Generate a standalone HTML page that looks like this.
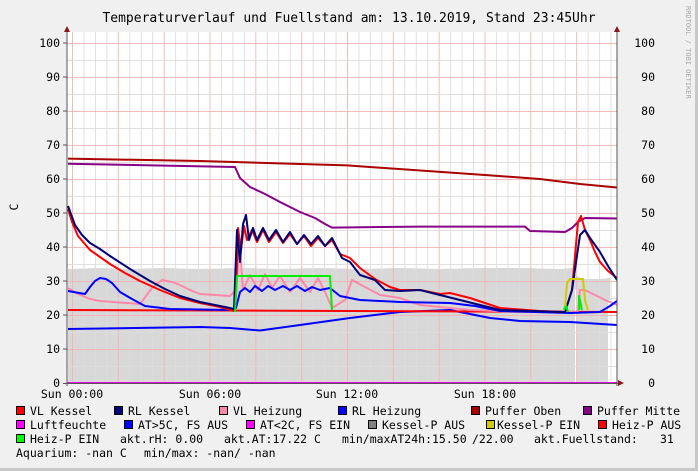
<!DOCTYPE html>
<html><head><meta charset="utf-8"><style>
html,body{margin:0;padding:0;background:#c8c8c8}
svg{display:block}
text{font-family:"DejaVu Sans Mono","Liberation Mono",monospace;fill:#000;white-space:pre}
</style></head><body>
<svg width="698" height="471" viewBox="0 0 698 471" xmlns="http://www.w3.org/2000/svg">
<defs>
<pattern id="gv" patternUnits="userSpaceOnUse" x="72" y="0" width="45.833" height="471">
<rect x="0" y="0" width="1" height="471" fill="#f0b4b4"/>
<rect x="11.46" y="0" width="1" height="471" fill="#dcdcdc"/>
<rect x="22.92" y="0" width="1" height="471" fill="#dcdcdc"/>
<rect x="34.37" y="0" width="1" height="471" fill="#dcdcdc"/>
</pattern>
<pattern id="gh" patternUnits="userSpaceOnUse" x="0" y="43" width="698" height="34">
<rect x="0" y="0" width="698" height="1" fill="#f0b4b4"/>
<rect x="0" y="17" width="698" height="1" fill="#dcdcdc"/>
</pattern>
<clipPath id="pc"><rect x="67" y="32" width="550" height="352"/></clipPath>
</defs>
<rect x="0" y="0" width="695" height="468" fill="#f0f0f0"/>
<rect x="67" y="32" width="550" height="351" fill="#fff"/>
<g clip-path="url(#pc)">
<polygon fill="#d8d8d8" points="68,383 68,269 100,268 130,269 160,268 200,269 240,268 280,269 320,268 360,269 400,268 440,269 480,268 520,268 560,269 573,268 576,276 584,279 600,279 610,278 610,383"/>
<rect x="575" y="290" width="2" height="93" fill="#fff"/>
<rect x="608" y="300" width="2" height="83" fill="#fff"/>
<rect x="67" y="32" width="550" height="352" fill="url(#gv)" opacity="0.9"/>
<rect x="67" y="32" width="550" height="352" fill="url(#gh)" opacity="0.9"/>
<g fill="none" stroke-width="2" stroke-linejoin="round">
<path stroke="#aa0000" d="M68,158.6 L200,161 L347,165.4 L485,175 L540,179 L580,184 L617,187.5"/>
<path stroke="#880088" d="M68,163.7 L235,167 L240,178 L250,187 L265,194 L280,202 L300,212 L315,218 L325,224 L332,227.6 L420,226.6 L525,226.6 L530,231 L565,232 L572,228 L578,222 L585,218 L617,218.5"/>
<path stroke="#0000ff" d="M68,329 L200,327 L230,328 L260,330.5 L300,325 L350,318 L400,312 L450,310 L490,318 L520,321 L570,322 L617,325"/>
<path stroke="#ff0000" d="M68,310 L617,312"/>
<path stroke="#ff88aa" d="M68,288 L78,294 L90,299 L100,301 L140,304 L146,296 L152,288 L162,280 L172,282 L180,285 L190,290 L200,294 L230,296 L236,290 L240,248 L243,290 L250,275 L258,290 L265,274 L272,288 L280,276 L290,292 L300,278 L310,292 L318,278 L325,292 L332,308 L345,300 L352,280 L365,287 L380,295 L400,298 L420,305 L470,310 L520,312 L578,312 L580,290 L585,290 L605,300 L617,305"/>
<path stroke="#0000ff" d="M68,291 L85,294 L90,287 L95,281 L100,278 L106,279 L112,283 L120,292 L132,299 L145,306 L170,309 L230,310 L236,308 L240,292 L245,288 L250,292 L255,286 L262,291 L268,286 L275,290 L283,286 L290,290 L297,286 L305,291 L312,287 L320,290 L330,288 L340,296 L360,300 L400,302 L450,303 L475,306 L500,311 L570,313 L600,312 L610,306 L617,301"/>
<path stroke="#ff0000" d="M68,209 L72,222 L78,236 L84,243 L90,250 L100,257 L110,264 L125,273 L140,281 L160,290 L180,298 L200,303 L220,307 L234,311 L236,295 L238,228 L241,250 L244,226 L247,240 L252,230 L257,242 L263,230 L269,242 L276,232 L283,243 L290,234 L297,244 L304,236 L311,246 L318,238 L325,246 L332,240 L340,254 L350,258 L360,268 L375,279 L390,287 L400,290 L420,290 L440,294 L450,293 L470,298 L500,308 L540,311 L565,312 L572,290 L578,222 L581,216 L585,230 L590,240 L595,252 L600,262 L608,271 L617,278"/>
<path stroke="#000077" d="M68,206 L75,225 L82,235 L90,243 L100,249 L110,256 L130,269 L150,281 L165,289 L180,296 L200,302 L225,307 L234,309 L237,230 L240,262 L243,224 L246,215 L249,240 L253,228 L257,240 L263,228 L269,240 L276,230 L283,242 L290,232 L297,244 L304,235 L311,244 L318,236 L325,246 L332,238 L342,258 L350,262 L360,275 L375,280 L385,290 L400,291 L420,290 L440,295 L460,300 L500,310 L565,312 L572,290 L580,235 L585,230 L590,238 L595,245 L600,252 L608,266 L617,280"/>
<path stroke="#00ee00" d="M235,312 L237,276 L330,276 L332,310"/>
<path stroke="#00ee00" d="M564,310 L566,305 L568,312 M579,310 L579,296 L582,310"/>
<path stroke="#cccc00" d="M565,306 L567,283 L570,279 L583,279 L585,300 L588,310"/>
<path stroke="#ee00ee" d="M67,383 L617,383"/>
</g>
</g>
<rect x="66.5" y="30" width="1" height="356" fill="#555"/>
<rect x="616.5" y="30" width="1" height="356" fill="#555"/>
<rect x="63" y="383" width="557" height="1" fill="#555"/>
<polygon points="67,26 64,32 70,32" fill="#8b1a1a"/>
<polygon points="617,26 614,32 620,32" fill="#8b1a1a"/>
<polygon points="624,383 618,380 618,386" fill="#8b1a1a"/>
<g fill="#555">
<rect x="63" y="42.5" width="4" height="1"/><rect x="63" y="76.5" width="4" height="1"/><rect x="63" y="110.5" width="4" height="1"/><rect x="63" y="144.5" width="4" height="1"/><rect x="63" y="178.5" width="4" height="1"/><rect x="63" y="212.5" width="4" height="1"/><rect x="63" y="246.5" width="4" height="1"/><rect x="63" y="280.5" width="4" height="1"/><rect x="63" y="314.5" width="4" height="1"/><rect x="63" y="348.5" width="4" height="1"/>
</g>
<text x="349" y="22" font-size="13" text-anchor="middle">Temperaturverlauf und Fuellstand am: 13.10.2019, Stand 23:45Uhr</text>
<g font-size="11.5" text-anchor="end">
<text x="60" y="47">100</text><text x="60" y="81">90</text><text x="60" y="115">80</text><text x="60" y="149">70</text><text x="60" y="183">60</text><text x="60" y="217">50</text><text x="60" y="251">40</text><text x="60" y="285">30</text><text x="60" y="319">20</text><text x="60" y="353">10</text><text x="60" y="387">0</text>
<text x="655" y="47">100</text><text x="655" y="81">90</text><text x="655" y="115">80</text><text x="655" y="149">70</text><text x="655" y="183">60</text><text x="655" y="217">50</text><text x="655" y="251">40</text><text x="655" y="285">30</text><text x="655" y="319">20</text><text x="655" y="353">10</text><text x="655" y="387">0</text>
</g>
<g font-size="11.5" text-anchor="middle">
<text x="72" y="398">Sun 00:00</text><text x="210" y="398">Sun 06:00</text><text x="347" y="398">Sun 12:00</text><text x="485" y="398">Sun 18:00</text>
</g>
<text x="18" y="207" font-size="11.5" text-anchor="middle" transform="rotate(-90 18 207)">C</text>
<text x="686" y="6" font-size="7" style="fill:#aaa" transform="rotate(90 686 6)">RRDTOOL / TOBI OETIKER</text>
<g stroke="#000" stroke-width="1">
<rect x="16.5" y="406.5" width="8" height="8" fill="#ff0000"/>
<rect x="114.5" y="406.5" width="8" height="8" fill="#000077"/>
<rect x="219.5" y="406.5" width="8" height="8" fill="#ff88aa"/>
<rect x="338.5" y="406.5" width="8" height="8" fill="#0000ff"/>
<rect x="471.5" y="406.5" width="8" height="8" fill="#aa0000"/>
<rect x="583.5" y="406.5" width="8" height="8" fill="#880088"/>
<rect x="16.5" y="420.5" width="8" height="8" fill="#ff00ff"/>
<rect x="124.5" y="420.5" width="8" height="8" fill="#0000ff"/>
<rect x="246.5" y="420.5" width="8" height="8" fill="#ff00ff"/>
<rect x="368.5" y="420.5" width="8" height="8" fill="#808080"/>
<rect x="486.5" y="420.5" width="8" height="8" fill="#cccc00"/>
<rect x="598.5" y="420.5" width="8" height="8" fill="#ff0000"/>
<rect x="16.5" y="434.5" width="8" height="8" fill="#00ff00"/>
</g>
<g font-size="11.5">
<text x="30" y="415">VL Kessel</text>
<text x="128" y="415">RL Kessel</text>
<text x="233" y="415">VL Heizung</text>
<text x="352" y="415">RL Heizung</text>
<text x="485" y="415">Puffer Oben</text>
<text x="597" y="415">Puffer Mitte</text>
<text x="30" y="429">Luftfeuchte</text>
<text x="138" y="429">AT&gt;5C, FS AUS</text>
<text x="260" y="429">AT&lt;2C, FS EIN</text>
<text x="382" y="429">Kessel-P AUS</text>
<text x="497" y="429">Kessel-P EIN</text>
<text x="612" y="429">Heiz-P AUS</text>
<text x="30" y="443">Heiz-P EIN</text>
<text x="120" y="443">akt.rH: 0.00</text>
<text x="224" y="443">akt.AT:17.22 C</text>
<text x="342" y="443">min/maxAT24h:15.50</text>
<text x="472" y="443">/22.00</text>
<text x="534" y="443">akt.Fuellstand:</text>
<text x="660" y="443">31</text>
<text x="16" y="457">Aquarium: -nan C</text>
<text x="144" y="457">min/max: -nan/ -nan</text>
</g>
</svg>
</body></html>
